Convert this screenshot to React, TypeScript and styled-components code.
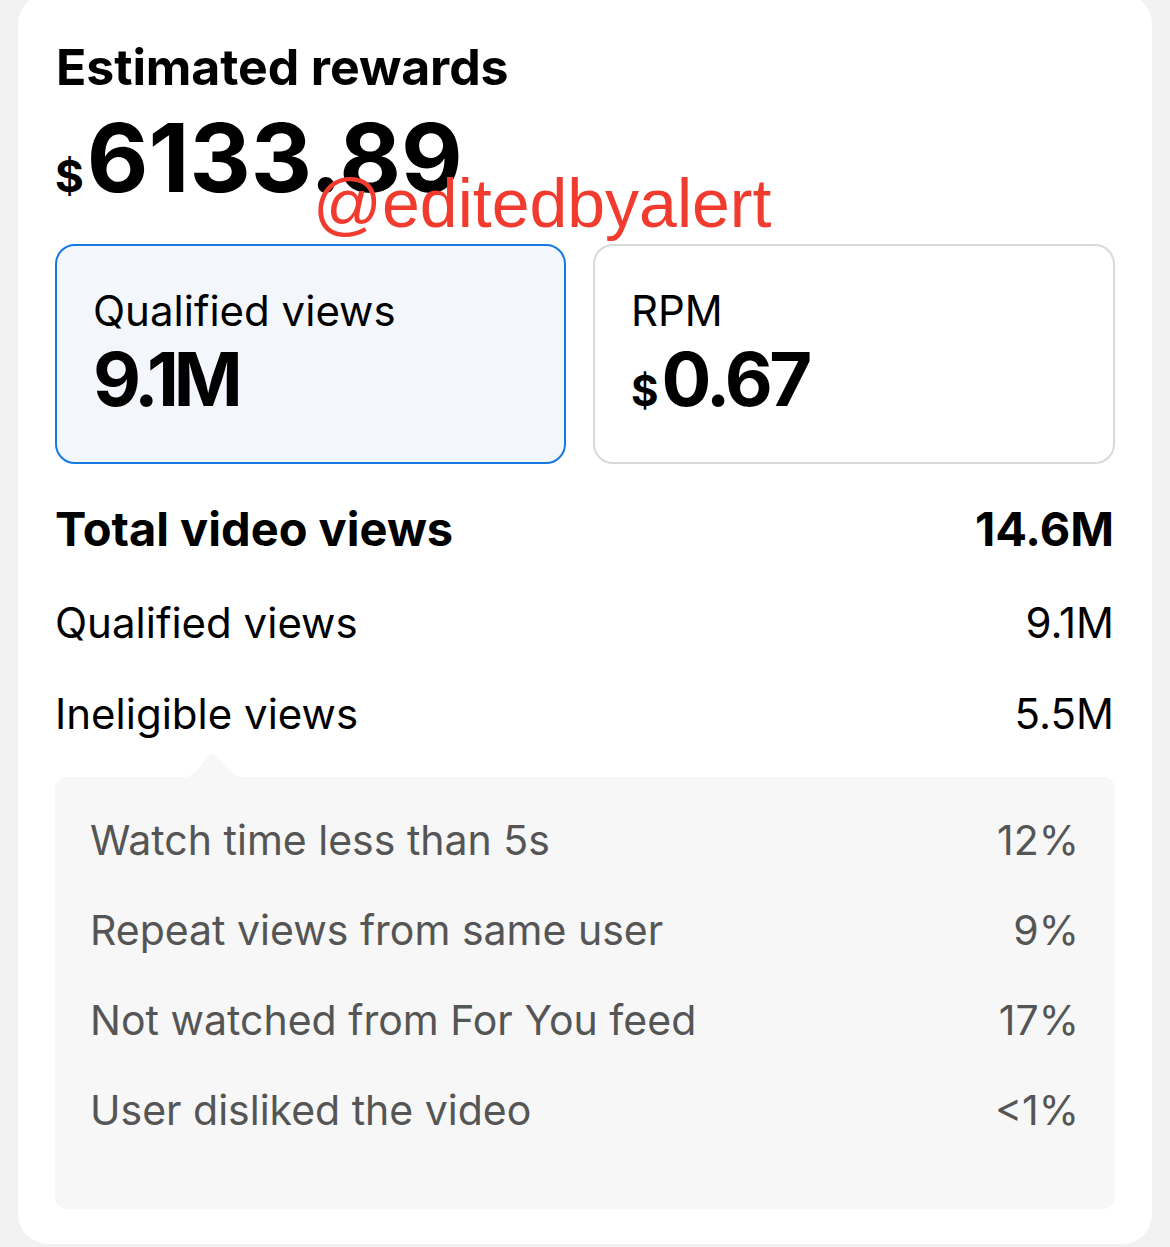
import React from "react";
import styled, { createGlobalStyle } from "styled-components";

const GlobalStyle = createGlobalStyle`
  html, body {
    margin: 0;
    padding: 0;
    background: #f2f2f2;
  }
  body {
    font-family: Inter, "Noto Sans", "Liberation Sans", sans-serif;
    color: #000;
    -webkit-font-smoothing: antialiased;
  }
`;

const Page = styled.div`
  height: 1247px;
  padding: 0 18px;
  box-sizing: border-box;
  overflow: hidden;
`;

const Card = styled.div`
  position: relative;
  margin-top: -6px;
  background: #fff;
  border-radius: 30px;
  padding: 44px 38px 35px 38px;
  display: flex;
  flex-direction: column;
`;

const Title = styled.h1`
  margin: 0;
  font-size: 50px;
  line-height: 58px;
  font-weight: 700;
  letter-spacing: -0.1px;
`;

const Amount = styled.div`
  margin-top: 12px;
  font-size: 95px;
  line-height: 100px;
  font-weight: 700;
  letter-spacing: 0;
  margin-left: -1px;
`;

const Currency = styled.span<{ $size: number }>`
  font-size: ${(p) => p.$size}px;
  line-height: 1;
  font-weight: 700;
  letter-spacing: 0;
  margin-right: 3px;
`;

const Watermark = styled.div`
  position: absolute;
  left: 295px;
  top: 175px;
  font-family: "Liberation Sans", Arial, sans-serif;
  font-size: 68px;
  line-height: 68px;
  color: #f23b2f;
  pointer-events: none;
  white-space: nowrap;
`;

const Tiles = styled.div`
  margin: 36px -1px 0 -1px;
  display: grid;
  grid-template-columns: 511px 1fr;
  gap: 27px;
`;

const Tile = styled.div<{ $active?: boolean }>`
  box-sizing: border-box;
  height: 220px;
  border-radius: 20px;
  border: 2px solid ${(p) => (p.$active ? "#1479e3" : "#d9d9d9")};
  background: ${(p) => (p.$active ? "#f3f7fc" : "#fff")};
  padding: 40px 36px 0 36px;
  display: flex;
  flex-direction: column;
`;

const TileLabel = styled.div`
  font-size: 42px;
  line-height: 50px;
  font-weight: 400;
`;

const TileValue = styled.div<{ $tight?: boolean }>`
  margin-top: 3px;
  font-size: 74px;
  line-height: 80px;
  font-weight: 700;
  letter-spacing: ${(p) => (p.$tight ? "-5px" : "-3.5px")};
`;

const Stats = styled.div`
  margin-top: 37px;
  display: flex;
  flex-direction: column;
  gap: 41px;
`;

const StatRow = styled.div<{ $strong?: boolean }>`
  display: flex;
  justify-content: space-between;
  align-items: baseline;
  font-size: ${(p) => (p.$strong ? 47 : 42)}px;
  line-height: ${(p) => (p.$strong ? 56 : 50)}px;
  font-weight: ${(p) => (p.$strong ? 700 : 400)};
  margin-left: -1px;
`;

const Breakdown = styled.div`
  position: relative;
  margin: 38px -1px 0 -1px;
  background: #f7f7f7;
  border-radius: 12px;
  padding: 38px 36px 74px 35px;
  display: flex;
  flex-direction: column;
  gap: 40px;
`;

const Pointer = styled.svg`
  position: absolute;
  left: 126px;
  top: -23px;
  width: 64px;
  height: 24px;
`;

const ReasonRow = styled.div`
  display: flex;
  justify-content: space-between;
  align-items: baseline;
  font-size: 41px;
  line-height: 50px;
  color: #555555;
  font-weight: 400;
`;

const reasons = [
  { label: "Watch time less than 5s", value: "12%" },
  { label: "Repeat views from same user", value: "9%" },
  { label: "Not watched from For You feed", value: "17%" },
  { label: "User disliked the video", value: "<1%" },
];

export default function App() {
  return (
    <>
      <GlobalStyle />
      <Page>
        <Card>
          <Title>Estimated rewards</Title>
          <Amount>
            <Currency $size={44}>$</Currency>6133.89
          </Amount>
          <Watermark>@editedbyalert</Watermark>
          <Tiles>
            <Tile $active>
              <TileLabel>Qualified views</TileLabel>
              <TileValue $tight>9.1M</TileValue>
            </Tile>
            <Tile>
              <TileLabel>RPM</TileLabel>
              <TileValue>
                <Currency $size={42}>$</Currency>0.67
              </TileValue>
            </Tile>
          </Tiles>
          <Stats>
            <StatRow $strong>
              <span>Total video views</span>
              <span>14.6M</span>
            </StatRow>
            <StatRow>
              <span>Qualified views</span>
              <span>9.1M</span>
            </StatRow>
            <StatRow>
              <span>Ineligible views</span>
              <span>5.5M</span>
            </StatRow>
          </Stats>
          <Breakdown>
            <Pointer viewBox="0 0 64 24">
              <path d="M0 24 C18 24 24 0 32 0 C40 0 46 24 64 24 Z" fill="#f7f7f7" />
            </Pointer>
            {reasons.map((r) => (
              <ReasonRow key={r.label}>
                <span>{r.label}</span>
                <span>{r.value}</span>
              </ReasonRow>
            ))}
          </Breakdown>
        </Card>
      </Page>
    </>
  );
}
